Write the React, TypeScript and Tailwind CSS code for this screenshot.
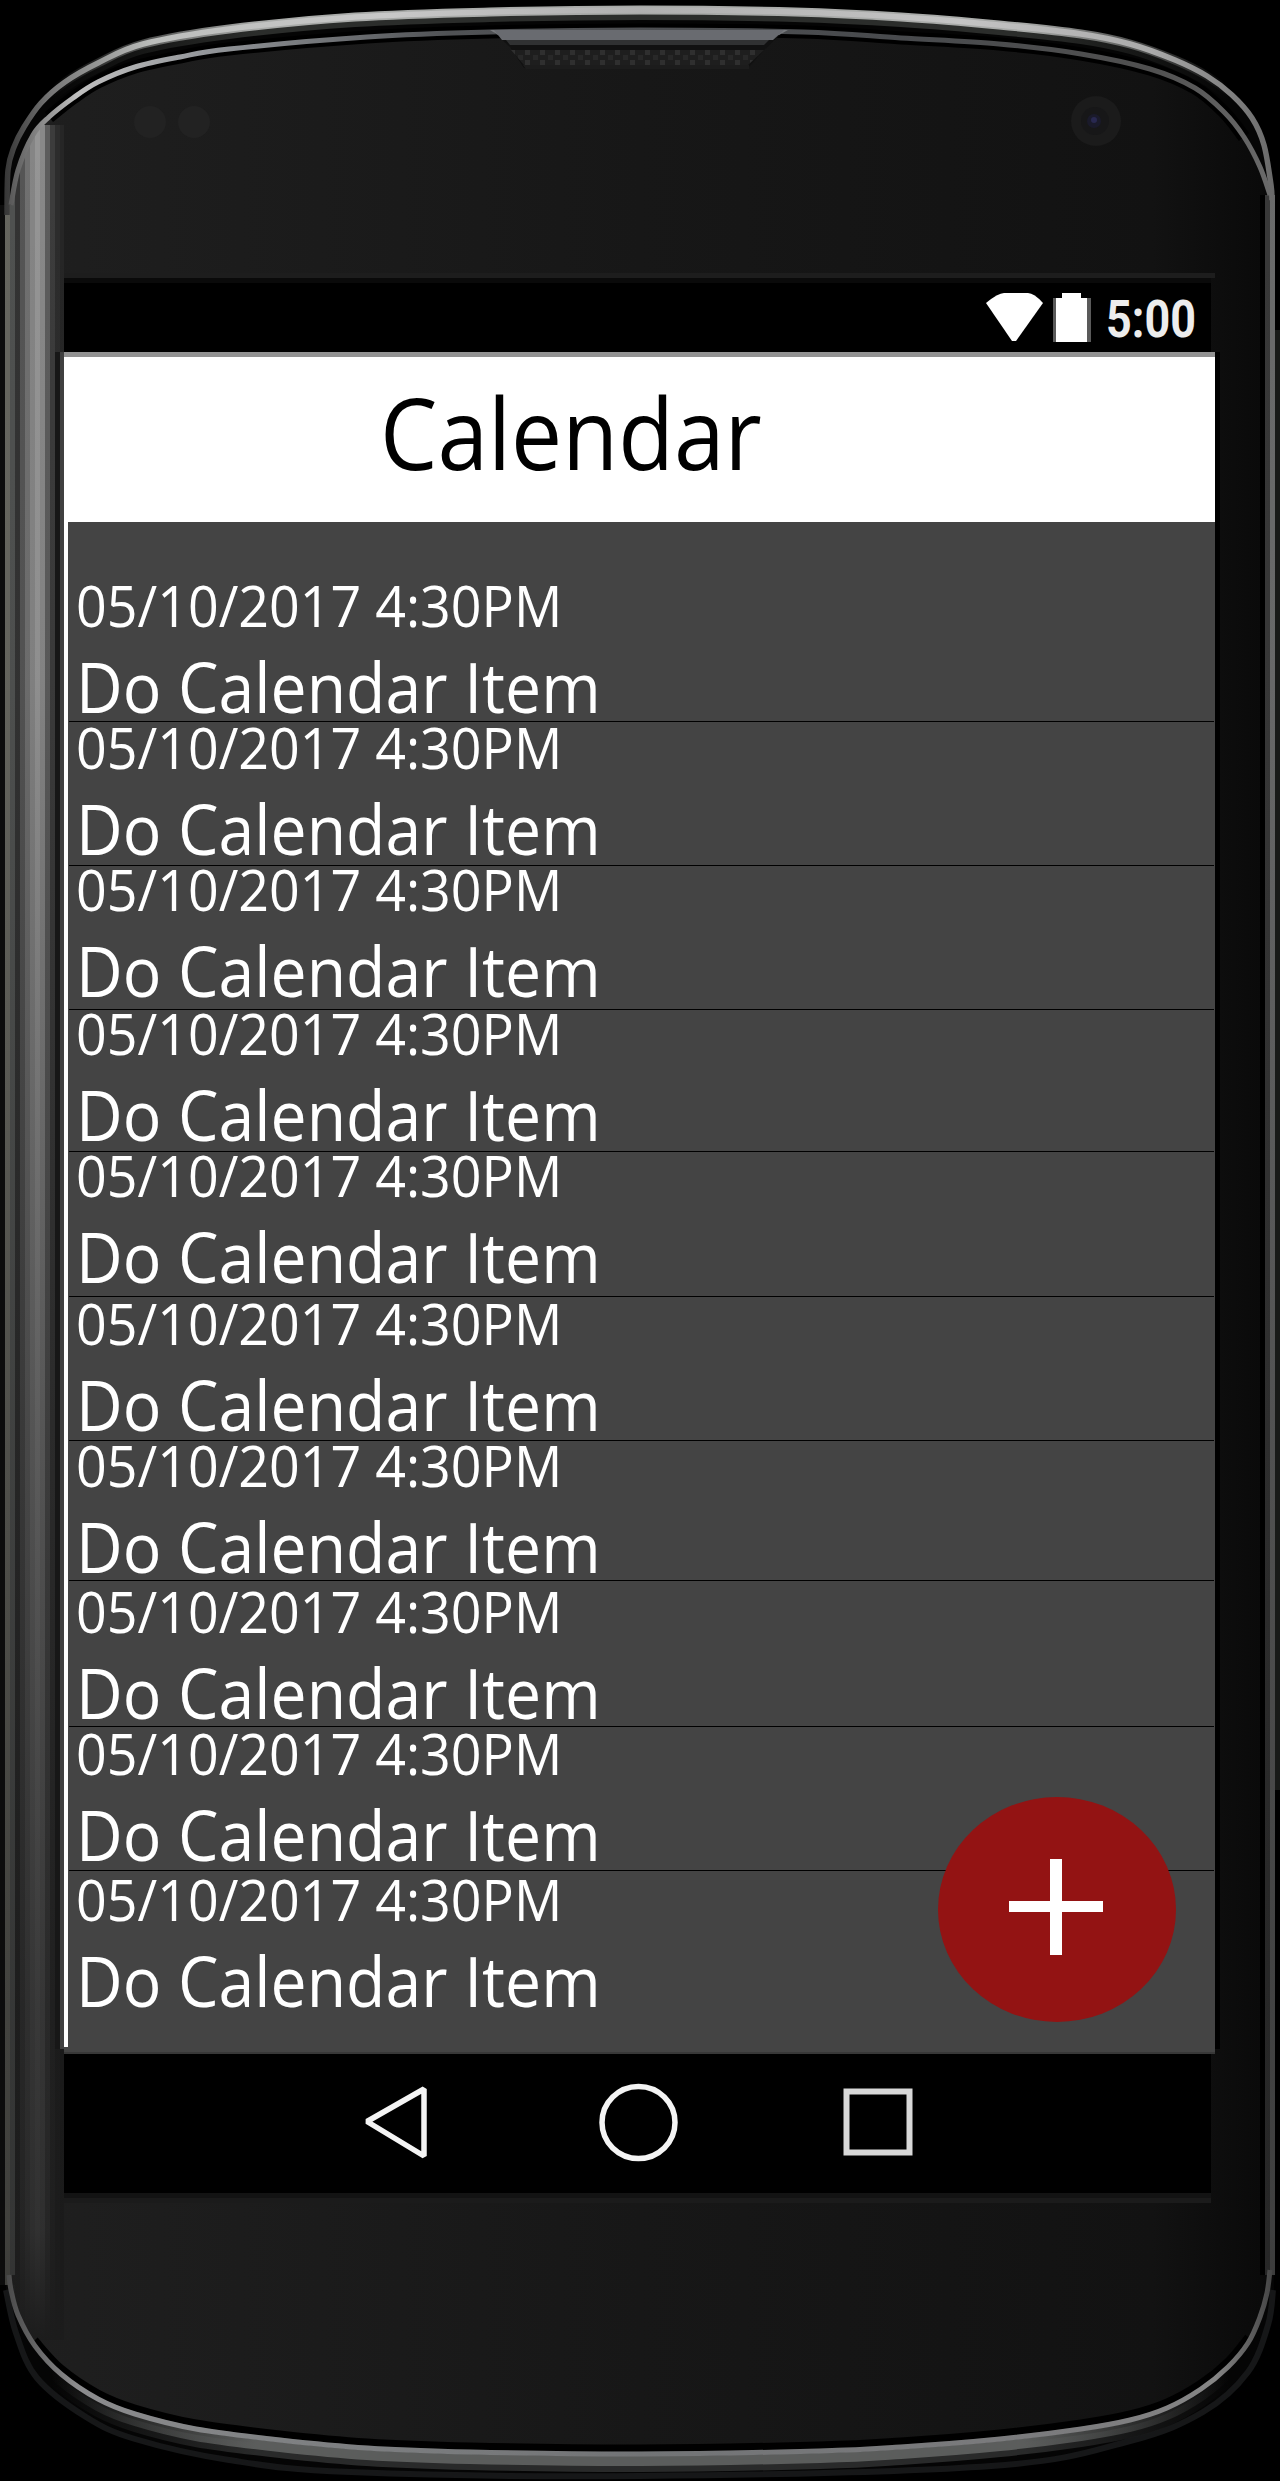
import React from "react";

type Point = [number, number];

// Catmull-Rom spline through the given points, as an SVG path.
function curve(pts: Point[]): string {
  let d = `M${pts[0][0]} ${pts[0][1]}`;
  for (let i = 0; i < pts.length - 1; i++) {
    const a = pts[Math.max(i - 1, 0)];
    const b = pts[i];
    const c = pts[i + 1];
    const e = pts[Math.min(i + 2, pts.length - 1)];
    d += `C${b[0] + (c[0] - a[0]) / 6} ${b[1] + (c[1] - a[1]) / 6} ${c[0] - (e[0] - b[0]) / 6} ${c[1] - (e[1] - b[1]) / 6} ${c[0]} ${c[1]}`;
  }
  return d;
}

const topOuter: Point[] = [[7, 215], [8, 170], [14, 147], [24, 127], [41, 103], [65, 82], [98, 63], [143, 44], [229, 29], [355, 17], [490, 12], [640, 10], [795, 12], [901, 17], [999, 25], [1081, 34], [1130, 44], [1175, 60], [1207, 76], [1232, 95], [1252, 118], [1264, 145], [1271, 185], [1272, 200]];
const topInner: Point[] = [[11, 205], [18, 170], [33, 135], [49, 117], [73, 98], [98, 82], [135, 67], [180, 57], [229, 49], [367, 37], [490, 32], [640, 30], [803, 32], [901, 38], [999, 44], [1081, 54], [1150, 69], [1195, 88], [1224, 112], [1244, 137], [1260, 167], [1270, 195]];
const bottomInner: Point[] = [[9, 2275], [11, 2290], [18, 2315], [35, 2346], [61, 2374], [98, 2399], [135, 2414], [196, 2429], [280, 2440], [367, 2448], [470, 2452], [640, 2454], [820, 2451], [901, 2447], [1000, 2439], [1081, 2429], [1130, 2420], [1167, 2408], [1201, 2389], [1228, 2367], [1248, 2343], [1260, 2317], [1267, 2293], [1270, 2270]];
const bottomOuter: Point[] = [[6, 2290], [16, 2333], [37, 2378], [86, 2417], [135, 2439], [229, 2460], [351, 2472], [640, 2476], [991, 2466], [1130, 2441], [1203, 2412], [1248, 2372], [1268, 2325], [1273, 2290]];
const body =
  curve(topOuter) + "L1274 2290" + curve([...bottomOuter].reverse()).replace("M", "L") + "Z";
const face =
  curve(topInner) + "L1274 2270" + curve([...bottomInner].reverse()).replace("M", "L") + "Z";

const leftBands = [
  [0, 5, "#0c0c0c"], [5, 5, "#66665f"], [10, 5, "#4f5150"], [15, 5, "#333333"],
  [20, 5, "#555555"], [25, 5, "#707070"], [30, 5, "#858585"], [35, 5, "#959595"],
  [40, 5, "#888888"], [45, 5, "#5c5c5c"], [50, 5, "#3c3c3c"], [55, 5, "#2c2c2c"], [60, 4, "#262626"],
] as const;

// Horizontal gradient of one colour that is clear at both ends of the device.
function EndFade({ id, color }: { id: string; color: string }) {
  return (
    <linearGradient id={id} gradientUnits="userSpaceOnUse" x1="0" x2="1280" y1="0" y2="0">
      <stop offset="0.04" stopColor={color} stopOpacity="0" />
      <stop offset="0.2" stopColor={color} />
      <stop offset="0.8" stopColor={color} />
      <stop offset="0.96" stopColor={color} stopOpacity="0" />
    </linearGradient>
  );
}

function DeviceFrame() {
  return (
    <svg className="absolute inset-0" width="1280" height="2481" viewBox="0 0 1280 2481" fill="none" aria-hidden="true">
      <defs>
        <EndFade id="rimWide" color="#a8aaa8" />
        <EndFade id="rimShade" color="#2b2d2b" />
        <EndFade id="lipLight" color="#5b5d5c" />
        <EndFade id="lipDark" color="#292a2a" />
        <linearGradient id="face" x1="0" x2="1" y1="0" y2="0">
          <stop offset="0" stopColor="#1f1f1f" />
          <stop offset="0.5" stopColor="#171717" />
          <stop offset="0.9" stopColor="#121212" />
          <stop offset="0.985" stopColor="#0a0a0a" />
          <stop offset="1" stopColor="#050505" />
        </linearGradient>
        <linearGradient id="rim" gradientUnits="userSpaceOnUse" x1="0" x2="1280" y1="0" y2="0">
          <stop offset="0" stopColor="#303030" />
          <stop offset="0.04" stopColor="#777777" />
          <stop offset="0.12" stopColor="#bcbebc" />
          <stop offset="0.3" stopColor="#c8c8c8" />
          <stop offset="0.5" stopColor="#b0b0b0" />
          <stop offset="0.75" stopColor="#c4c4c4" />
          <stop offset="0.9" stopColor="#aaaaaa" />
          <stop offset="1" stopColor="#666666" />
        </linearGradient>
        <linearGradient id="rimInner" gradientUnits="userSpaceOnUse" x1="0" x2="1280" y1="0" y2="0">
          <stop offset="0" stopColor="#4a4a4a" />
          <stop offset="0.06" stopColor="#c0c0c0" />
          <stop offset="0.16" stopColor="#93969a" />
          <stop offset="0.35" stopColor="#505255" />
          <stop offset="0.7" stopColor="#484a4d" />
          <stop offset="0.9" stopColor="#505050" />
          <stop offset="1" stopColor="#6c6c6c" />
        </linearGradient>
        <linearGradient id="rimBottom" gradientUnits="userSpaceOnUse" x1="0" x2="1280" y1="0" y2="0">
          <stop offset="0" stopColor="#444444" />
          <stop offset="0.06" stopColor="#8c8c8e" />
          <stop offset="0.2" stopColor="#808284" />
          <stop offset="0.5" stopColor="#727476" />
          <stop offset="0.85" stopColor="#7c7c7e" />
          <stop offset="0.95" stopColor="#858585" />
          <stop offset="1" stopColor="#3c3c3c" />
        </linearGradient>
        <linearGradient id="fade" gradientUnits="userSpaceOnUse" x1="0" x2="0" y1="120" y2="2340">
          <stop offset="0" stopColor="#151515" stopOpacity="0" />
          <stop offset="0.25" stopColor="#151515" stopOpacity="0.05" />
          <stop offset="0.6" stopColor="#151515" stopOpacity="0.45" />
          <stop offset="0.85" stopColor="#151515" stopOpacity="0.72" />
          <stop offset="0.95" stopColor="#181818" stopOpacity="0.8" />
          <stop offset="1" stopColor="#1c1c1c" stopOpacity="1" />
        </linearGradient>
        <pattern id="grille" width="15" height="10" patternUnits="userSpaceOnUse" x="510" y="50">
          <rect width="15" height="10" fill="#1e1e1e" />
          <rect x="0" y="0" width="5" height="5" fill="#2f2f2f" />
          <rect x="8" y="5" width="5" height="5" fill="#282828" />
        </pattern>
        <clipPath id="sideClip">
          <path d={face} />
        </clipPath>
      </defs>

      <path d={body} fill="#050505" />
      <g clipPath="url(#sideClip)">
        <rect width="1280" height="2481" fill="url(#face)" />
        {leftBands.map(([x, w, c]) => (
          <rect key={x} x={x} y="125" width={w} height="2215" fill={c} />
        ))}
        <rect x="0" y="125" width="64" height="2215" fill="url(#fade)" />
      </g>

      <rect x="0" y="205" width="5" height="2080" fill="#0c0c0c" />
      <rect x="5" y="205" width="5" height="2080" fill="#66665f" />
      <rect x="10" y="205" width="5" height="2070" fill="#4f5150" />
      <rect x="5" y="205" width="10" height="2080" fill="url(#fade)" opacity="0.6" />
      <rect x="1260" y="195" width="5" height="2080" fill="#000000" />
      <rect x="1265" y="195" width="5" height="2080" fill="#383838" />
      <rect x="1270" y="195" width="5" height="2080" fill="#6a6b6b" />
      <rect x="1275" y="330" width="5" height="1460" fill="#181a18" />
      <rect x="1265" y="195" width="10" height="2080" fill="url(#fade)" opacity="0.65" />

      <path d={curve(topInner.slice(3, 20))} stroke="#000000" strokeWidth="13" />
      <path d={curve(topOuter)} stroke="url(#rimShade)" strokeWidth="8" transform="translate(0 6)" />
      <path d={curve(topOuter)} stroke="url(#rimWide)" strokeWidth="9" />
      <path d={curve(topOuter)} stroke="url(#rim)" strokeWidth="5.500" />
      <path d={curve(topInner)} stroke="url(#rimInner)" strokeWidth="5" />

      <path d={curve(bottomOuter)} stroke="#161718" strokeWidth="6" />
      <path d={curve(bottomInner.slice(3, 21))} stroke="#000000" strokeWidth="7" transform="translate(0 -6)" />
      <path d={curve(bottomInner)} stroke="url(#lipDark)" strokeWidth="12" transform="translate(0 12)" />
      <path d={curve(bottomInner)} stroke="url(#lipLight)" strokeWidth="10" transform="translate(0 7)" />
      <path d={curve(bottomInner)} stroke="url(#rimBottom)" strokeWidth="5" />

      <path d="M494 32H783L764 50L748 68H524L510 47Z" fill="#111111" />
      <path d="M490 30H788L779 35H498Z" fill="#76787c" />
      <path d="M494 30H784L773 40H502Z" fill="#696b70" />
      <path d="M506 40H769L764 45H510Z" fill="#303132" />
      <path d="M511 50H764L748 65H524Z" fill="url(#grille)" />
      <path d="M523 65H749V69H526Z" fill="#1c1c1c" />

      <ellipse cx="150" cy="122" rx="16" ry="16" fill="#222222" />
      <ellipse cx="194" cy="122" rx="16" ry="16" fill="#222222" />
      <circle cx="1096" cy="121" r="25" fill="#1b1b1b" />
      <circle cx="1095" cy="121" r="14" fill="#171718" />
      <circle cx="1094" cy="121" r="7" fill="#1a1a2a" />
      <circle cx="1094" cy="120" r="3" fill="#282850" />

      <rect x="64" y="273" width="1151" height="5" fill="#1d1d1d" />
      <rect x="64" y="2193" width="1147" height="5" fill="#131313" />
      <rect x="64" y="2198" width="1147" height="5" fill="#1b1b1b" />
      <rect x="55" y="352" width="5" height="1697" fill="#171717" />
      <rect x="60" y="352" width="4" height="1697" fill="#404040" />
      <rect x="1215" y="352" width="5" height="1697" fill="#000000" />
    </svg>
  );
}

function StatusBar() {
  return (
    <div className="relative h-[74px] w-[1147px] border-t-[5px] border-[#0a0a0a] bg-black">
      <div className="flex h-full items-start justify-end pr-[13px]">
        <svg className="mt-[8px] shrink-0" width="108" height="54" viewBox="984 291 108 54" aria-hidden="true">
          <path d="M986 303Q998 293 1004 293H1028Q1034 293 1043 303L1016 341H1012Z" fill="#fff" />
          <path d="M1053 298H1091V342H1053Z" fill="#5a5a5a" />
          <path d="M1062 293H1081V298H1087V342H1056V298H1062Z" fill="#fff" />
        </svg>
        <span className="ml-[14px] mt-[7px] w-[92px] whitespace-nowrap font-['Roboto'] text-[51px] font-bold leading-[60px] text-[#ededed]">
          <span className="inline-block origin-left scale-x-[0.88]">5:00</span>
        </span>
      </div>
    </div>
  );
}

const rows = [
  { id: 1, box: "h-[200px] pt-[63px]" },
  { id: 2, box: "h-[144px] pt-[5px]" },
  { id: 3, box: "h-[144px] pt-[3px]" },
  { id: 4, box: "h-[142px] pt-[3px]" },
  { id: 5, box: "h-[145px] pt-[3px]" },
  { id: 6, box: "h-[144px] pt-[6px]" },
  { id: 7, box: "h-[140px] pt-[4px]" },
  { id: 8, box: "h-[146px] pt-[10px]" },
  { id: 9, box: "h-[144px] pt-[6px]" },
];

function CalendarItem({ box, last = false }: { box: string; last?: boolean }) {
  return (
    <li className={`ml-px mr-px whitespace-nowrap pl-[7px] text-white ${last ? "" : "border-b border-black"} ${box}`}>
      <div className="w-max origin-left scale-x-[0.943] text-[57px] leading-[40px]">05/10/2017 4:30PM</div>
      <div className="mt-[31px] w-max origin-left scale-x-[0.932] text-[69px] leading-[60px]">Do Calendar Item</div>
    </li>
  );
}

export default function App() {
  return (
    <div className="relative h-[2481px] w-[1280px] overflow-hidden bg-black pl-[64px] pt-[278px] font-['Open_Sans',sans-serif]">
      <DeviceFrame />
      <div className="relative flex w-[1151px] flex-col">
        <StatusBar />
        <header className="h-[170px] border-t-[5px] border-[#929292] bg-white">
          <h1 className="ml-[316px] mt-[35px] w-max origin-left scale-x-[0.93] text-[98px] leading-[80px] text-black">Calendar</h1>
        </header>
        <main className="relative h-[1532px] border-b-2 border-[#383838] bg-[#444444]">
          <ul className="border-l-4 border-white">
            {rows.map((row) => (
              <CalendarItem key={row.id} box={row.box} />
            ))}
            <CalendarItem box="h-[176px] pt-[8px]" last />
          </ul>
          <button aria-label="Add item" className="absolute left-[874px] top-[1275px] h-[225px] w-[238px] rounded-[50%] bg-[#931313]">
            <svg className="h-full w-full" viewBox="938 1797 238 225" aria-hidden="true">
              <path d="M1050 1859h12v42h41v11h-41v43h-12v-43h-41v-11h41z" fill="#fff" />
            </svg>
          </button>
        </main>
        <nav className="flex h-[139px] w-[1147px] bg-black">
          <svg width="1147" height="139" viewBox="64 2054 1147 139" fill="none" stroke="#f4f4f4" strokeWidth="5.500" aria-label="Back, home, overview">
            <path d="M424 2089V2156L367 2121.500Z" strokeLinejoin="bevel" />
            <ellipse cx="638.500" cy="2122.500" rx="36.500" ry="36" />
            <rect x="846.500" y="2091.500" width="63" height="61" stroke="#d8d8d8" strokeWidth="6" />
          </svg>
        </nav>
      </div>
    </div>
  );
}
